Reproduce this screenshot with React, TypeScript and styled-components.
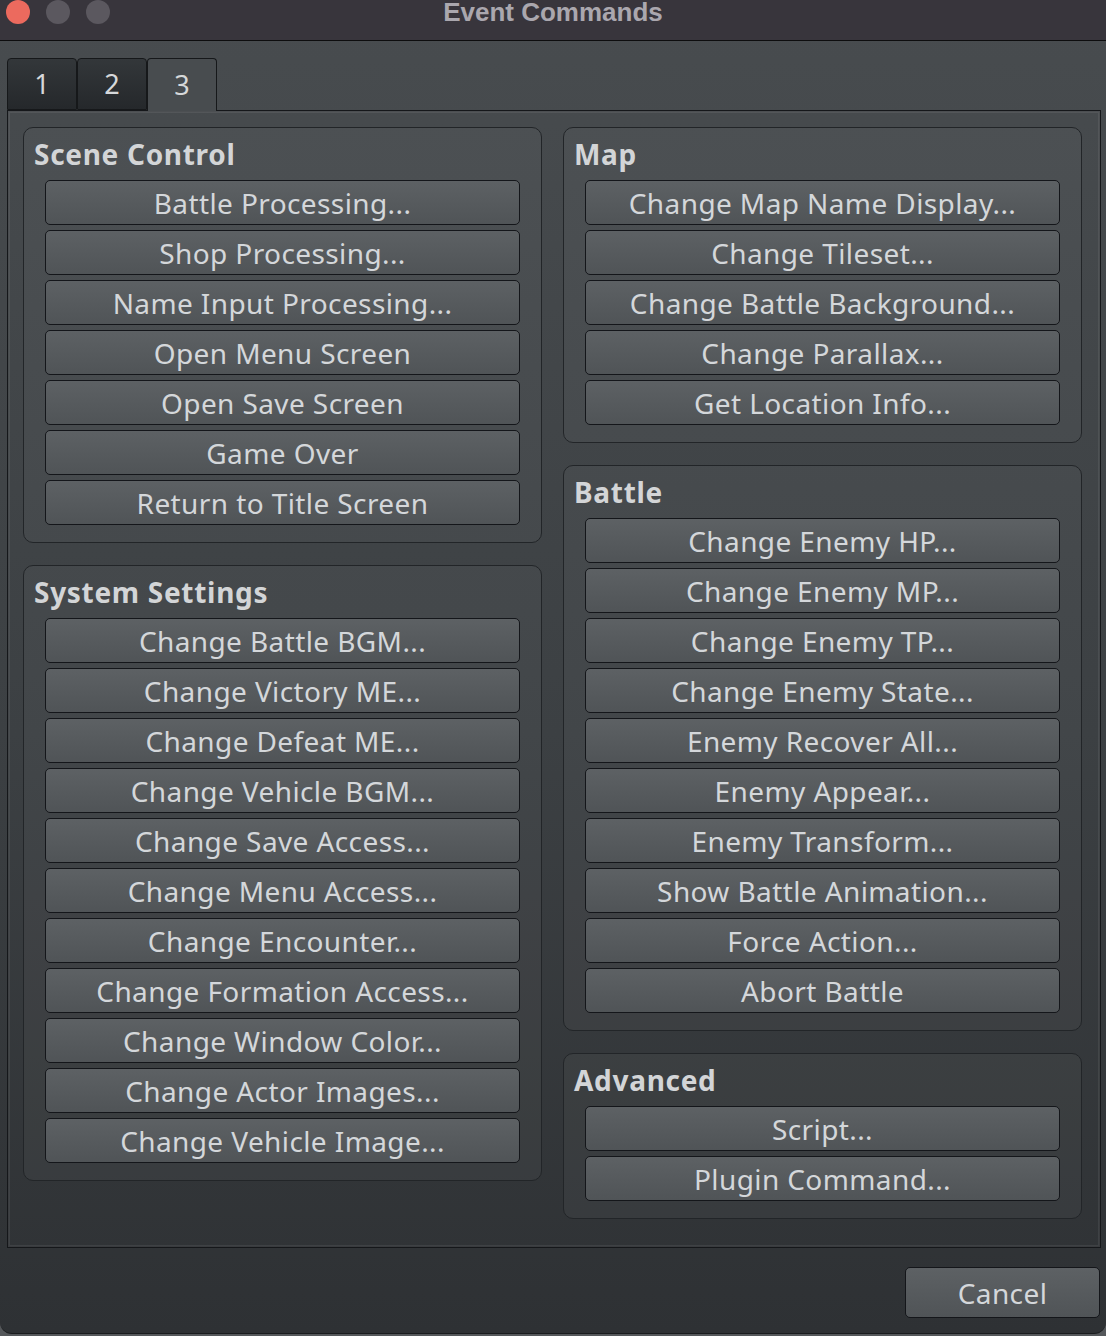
import React from "react";
import styled, { createGlobalStyle } from "styled-components";

const GlobalStyle = createGlobalStyle`
  html, body {
    margin: 0;
    padding: 0;
    background: #55585b;
  }
  body {
    font-family: "Noto Sans", "Open Sans", sans-serif;
  }
  * { box-sizing: border-box; }
`;

const Window = styled.div`
  width: 1106px;
  height: 1334px;
  display: flex;
  flex-direction: column;
  background: linear-gradient(180deg, #484c4f 0%, #3c4043 55%, #2e3134 100%);
  border-radius: 0 0 12px 12px;
  overflow: hidden;
  border-bottom: 1px solid #1a1c1e;
`;

const TitleBar = styled.div`
  height: 41px;
  flex: none;
  display: grid;
  grid-template-columns: 1fr auto 1fr;
  align-items: start;
  background: #38353c;
  border-bottom: 1px solid #0d0d0e;
`;

const Lights = styled.div`
  display: flex;
  gap: 16px;
  padding-left: 6px;
`;

const Light = styled.span<{ $color: string }>`
  width: 24px;
  height: 24px;
  border-radius: 50%;
  background: ${(p) => p.$color};
`;

const Title = styled.div`
  font-family: "Liberation Sans", Arial, sans-serif;
  font-weight: 700;
  font-size: 26px;
  line-height: 26px;
  margin-top: -1px;
  color: #aaa7ae;
  white-space: nowrap;
`;

const Body = styled.div`
  flex: 1;
  display: flex;
  flex-direction: column;
  padding: 17px 5px 0 7px;
`;

const TabBar = styled.div`
  display: flex;
  height: 52px;
  align-items: flex-start;
`;

const Tab = styled.div<{ $active?: boolean }>`
  position: relative;
  z-index: 1;
  width: 70px;
  height: ${(p) => (p.$active ? "53px" : "52px")};
  border: 1px solid #16181a;
  border-bottom: ${(p) => (p.$active ? "none" : "1px solid #16181a")};
  border-radius: 4px 4px 0 0;
  background: ${(p) =>
    p.$active
      ? "#484c4f"
      : "linear-gradient(180deg, #33373a 0%, #25282b 100%)"};
  display: flex;
  align-items: center;
  justify-content: center;
  padding-bottom: 2px;
  font-size: 27px;
  color: #d6d8da;
`;

const Pane = styled.div`
  width: 1094px;
  height: 1138px;
  border: 1px solid #15171a;
  box-shadow: inset 0 0 0 1px rgba(0, 0, 0, 0.08),
    inset 0 0 0 2px rgba(255, 255, 255, 0.07);
  display: grid;
  grid-template-columns: 519px 519px;
  column-gap: 21px;
  align-items: start;
  padding: 16px 0 0 15px;
`;

const Column = styled.div`
  display: flex;
  flex-direction: column;
  gap: 22px;
`;

const Group = styled.section`
  border: 1px solid #222528;
  border-radius: 10px;
  background: rgba(255, 255, 255, 0.035);
  padding: 8px 0 17px;
`;

const GroupTitle = styled.h2`
  margin: 0 0 8px;
  padding-left: 10px;
  height: 36px;
  font-size: 28px;
  line-height: 36px;
  font-weight: 700;
  letter-spacing: 0.7px;
  color: #d3d5d7;
`;

const ButtonList = styled.div`
  display: flex;
  flex-direction: column;
  gap: 5px;
  padding: 0 21px;
`;

const CommandButton = styled.button`
  height: 45px;
  width: 100%;
  border: 1.5px solid #14161a;
  border-radius: 5px;
  background: linear-gradient(180deg, #5d6164 0%, #505457 100%);
  font-family: "Noto Sans", "Open Sans", sans-serif;
  font-size: 28px;
  letter-spacing: 0.4px;
  color: #d4d7da;
  padding: 1px 0 0;
  display: flex;
  align-items: center;
  justify-content: center;
  white-space: nowrap;
`;

const Footer = styled.div`
  display: flex;
  justify-content: flex-end;
  padding: 19px 1px 0 0;
`;

const CancelButton = styled(CommandButton)`
  width: 195px;
  height: 51px;
`;

const groupsLeft = [
  {
    title: "Scene Control",
    items: [
      "Battle Processing...",
      "Shop Processing...",
      "Name Input Processing...",
      "Open Menu Screen",
      "Open Save Screen",
      "Game Over",
      "Return to Title Screen",
    ],
  },
  {
    title: "System Settings",
    items: [
      "Change Battle BGM...",
      "Change Victory ME...",
      "Change Defeat ME...",
      "Change Vehicle BGM...",
      "Change Save Access...",
      "Change Menu Access...",
      "Change Encounter...",
      "Change Formation Access...",
      "Change Window Color...",
      "Change Actor Images...",
      "Change Vehicle Image...",
    ],
  },
];

const groupsRight = [
  {
    title: "Map",
    items: [
      "Change Map Name Display...",
      "Change Tileset...",
      "Change Battle Background...",
      "Change Parallax...",
      "Get Location Info...",
    ],
  },
  {
    title: "Battle",
    items: [
      "Change Enemy HP...",
      "Change Enemy MP...",
      "Change Enemy TP...",
      "Change Enemy State...",
      "Enemy Recover All...",
      "Enemy Appear...",
      "Enemy Transform...",
      "Show Battle Animation...",
      "Force Action...",
      "Abort Battle",
    ],
  },
  {
    title: "Advanced",
    items: ["Script...", "Plugin Command..."],
  },
];

type G = { title: string; items: string[] };

const GroupBox = ({ g }: { g: G }) => (
  <Group>
    <GroupTitle>{g.title}</GroupTitle>
    <ButtonList>
      {g.items.map((it) => (
        <CommandButton key={it}>{it}</CommandButton>
      ))}
    </ButtonList>
  </Group>
);

export default function App() {
  return (
    <>
      <GlobalStyle />
      <Window>
        <TitleBar>
          <Lights>
            <Light $color="#ec6a5e" />
            <Light $color="#5b585f" />
            <Light $color="#5b585f" />
          </Lights>
          <Title>Event Commands</Title>
          <div />
        </TitleBar>
        <Body>
          <TabBar>
            <Tab>1</Tab>
            <Tab>2</Tab>
            <Tab $active>3</Tab>
          </TabBar>
          <Pane>
            <Column>
              {groupsLeft.map((g) => (
                <GroupBox key={g.title} g={g} />
              ))}
            </Column>
            <Column>
              {groupsRight.map((g) => (
                <GroupBox key={g.title} g={g} />
              ))}
            </Column>
          </Pane>
          <Footer>
            <CancelButton>Cancel</CancelButton>
          </Footer>
        </Body>
      </Window>
    </>
  );
}
